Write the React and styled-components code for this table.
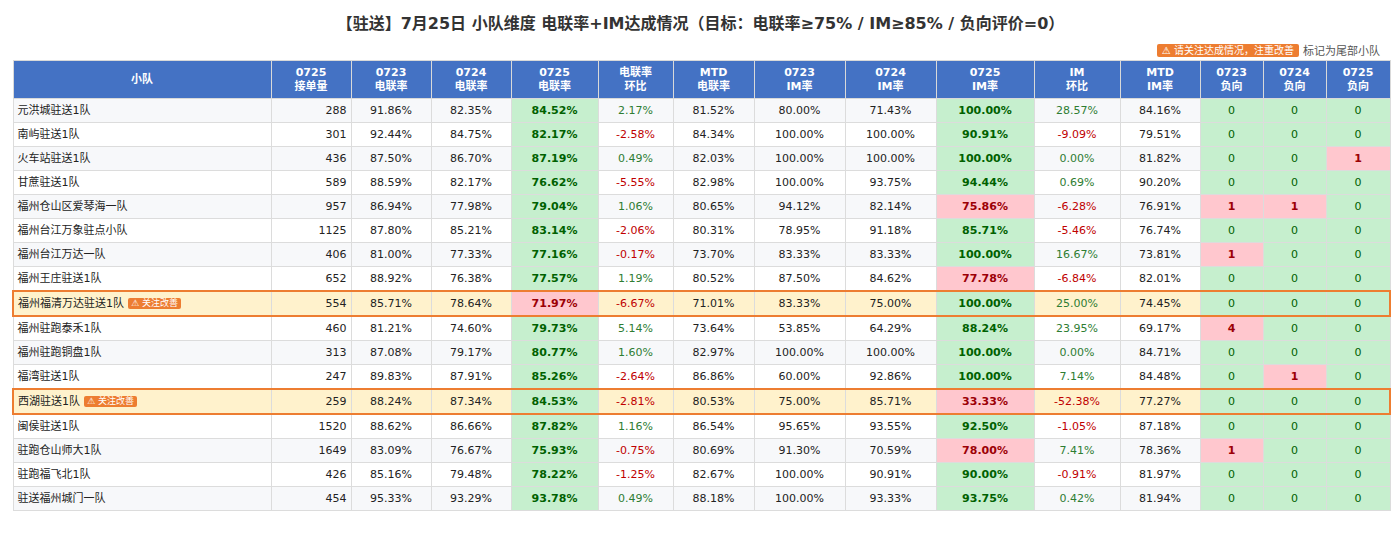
import React from "react";
import styled, { createGlobalStyle, css } from "styled-components";

const GlobalStyle = createGlobalStyle`
  html, body { margin: 0; padding: 0; background: #fff; }
  body { font-family: "DejaVu Sans", "Noto Sans CJK SC", sans-serif; color: #222; }
`;

const Page = styled.div`
  padding: 0 11px 0 12px;
`;

const Title = styled.h1`
  margin: 0;
  padding-top: 12px;
  height: 24px;
  line-height: 24px;
  text-align: center;
  font-size: 16px;
  font-weight: bold;
  color: #333;
`;

const Legend = styled.div`
  display: flex;
  justify-content: flex-end;
  align-items: center;
  gap: 4px;
  height: 16px;
  margin-top: 6px;
  margin-bottom: 2px;
  padding-right: 9px;
  font-size: 11px;
  color: #555;
`;

const Badge = styled.span`
  display: inline-block;
  background: #ed7d31;
  color: #fff;
  border-radius: 2px;
  font-size: ${(p) => (p.$small ? "9px" : "10px")};
  line-height: ${(p) => (p.$small ? "11px" : "13px")};
  padding: 0 ${(p) => (p.$small ? "3px" : "5px")};
  margin-left: ${(p) => (p.$small ? "4px" : "0")};
  white-space: nowrap;
  vertical-align: 1px;
`;

const Table = styled.table`
  width: 1377px;
  table-layout: fixed;
  border-collapse: collapse;
  font-size: 11px;
`;

const Th = styled.th`
  background: #4472c4;
  color: #fff;
  font-weight: bold;
  font-size: 11px;
  line-height: 14px;
  height: 37px;
  padding: 0 2px;
  border: 1px solid #d9d9d9;
  text-align: center;
`;

const tones = {
  good: css`background: #c6efce; color: #006100;`,
  bad: css`background: #ffc7ce; color: #9c0006;`,
};

const Td = styled.td`
  height: 23px;
  padding: 0 4px;
  line-height: 14px;
  border: 1px solid #dcdcdc;
  text-align: ${(p) => p.$align || "center"};
  white-space: nowrap;
  color: #222;
  ${(p) => p.$flag && css`background: #fff2cc; border-top: 2px solid #ed7d31; border-bottom: 2px solid #ed7d31;`}
  ${(p) => p.$first && p.$flag && css`border-left: 2px solid #ed7d31;`}
  ${(p) => p.$last && p.$flag && css`border-right: 2px solid #ed7d31;`}
  ${(p) => p.$tone && tones[p.$tone]}
  ${(p) => p.$strong && css`font-weight: bold;`}
  ${(p) => p.$delta === "up" && css`color: #2e7d32;`}
  ${(p) => p.$delta === "down" && css`color: #c00000;`}
`;

const Tr = styled.tr`
  background: ${(p) => (p.$odd ? "#f7f8fa" : "#fff")};
`;

const widths = [258, 80, 80, 80, 87, 75, 81, 91, 91, 98, 86, 80, 63, 63, 64];
const headers = [
  ["小队"],
  ["0725", "接单量"],
  ["0723", "电联率"],
  ["0724", "电联率"],
  ["0725", "电联率"],
  ["电联率", "环比"],
  ["MTD", "电联率"],
  ["0723", "IM率"],
  ["0724", "IM率"],
  ["0725", "IM率"],
  ["IM", "环比"],
  ["MTD", "IM率"],
  ["0723", "负向"],
  ["0724", "负向"],
  ["0725", "负向"],
];

const raw = [
  ["元洪城驻送1队", 288, "91.86", "82.35", "84.52", "2.17", "81.52", "80.00", "71.43", "100.00", "28.57", "84.16", 0, 0, 0],
  ["南屿驻送1队", 301, "92.44", "84.75", "82.17", "-2.58", "84.34", "100.00", "100.00", "90.91", "-9.09", "79.51", 0, 0, 0],
  ["火车站驻送1队", 436, "87.50", "86.70", "87.19", "0.49", "82.03", "100.00", "100.00", "100.00", "0.00", "81.82", 0, 0, 1],
  ["甘蔗驻送1队", 589, "88.59", "82.17", "76.62", "-5.55", "82.98", "100.00", "93.75", "94.44", "0.69", "90.20", 0, 0, 0],
  ["福州仓山区爱琴海一队", 957, "86.94", "77.98", "79.04", "1.06", "80.65", "94.12", "82.14", "75.86", "-6.28", "76.91", 1, 1, 0],
  ["福州台江万象驻点小队", 1125, "87.80", "85.21", "83.14", "-2.06", "80.31", "78.95", "91.18", "85.71", "-5.46", "76.74", 0, 0, 0],
  ["福州台江万达一队", 406, "81.00", "77.33", "77.16", "-0.17", "73.70", "83.33", "83.33", "100.00", "16.67", "73.81", 1, 0, 0],
  ["福州王庄驻送1队", 652, "88.92", "76.38", "77.57", "1.19", "80.52", "87.50", "84.62", "77.78", "-6.84", "82.01", 0, 0, 0],
  ["福州福清万达驻送1队", 554, "85.71", "78.64", "71.97", "-6.67", "71.01", "83.33", "75.00", "100.00", "25.00", "74.45", 0, 0, 0, true],
  ["福州驻跑泰禾1队", 460, "81.21", "74.60", "79.73", "5.14", "73.64", "53.85", "64.29", "88.24", "23.95", "69.17", 4, 0, 0],
  ["福州驻跑铜盘1队", 313, "87.08", "79.17", "80.77", "1.60", "82.97", "100.00", "100.00", "100.00", "0.00", "84.71", 0, 0, 0],
  ["福湾驻送1队", 247, "89.83", "87.91", "85.26", "-2.64", "86.86", "60.00", "92.86", "100.00", "7.14", "84.48", 0, 1, 0],
  ["西湖驻送1队", 259, "88.24", "87.34", "84.53", "-2.81", "80.53", "75.00", "85.71", "33.33", "-52.38", "77.27", 0, 0, 0, true],
  ["闽侯驻送1队", 1520, "88.62", "86.66", "87.82", "1.16", "86.54", "95.65", "93.55", "92.50", "-1.05", "87.18", 0, 0, 0],
  ["驻跑仓山师大1队", 1649, "83.09", "76.67", "75.93", "-0.75", "80.69", "91.30", "70.59", "78.00", "7.41", "78.36", 1, 0, 0],
  ["驻跑福飞北1队", 426, "85.16", "79.48", "78.22", "-1.25", "82.67", "100.00", "90.91", "90.00", "-0.91", "81.97", 0, 0, 0],
  ["驻送福州城门一队", 454, "95.33", "93.29", "93.78", "0.49", "88.18", "100.00", "93.33", "93.75", "0.42", "81.94", 0, 0, 0],
];

function Row({ r, i }) {
  const [name, orders, r23, r24, r25, rc, rm, i23, i24, i25, ic, im, n23, n24, n25, flag] = r;
  const f = !!flag;
  const delta = (v) => (parseFloat(v) < 0 ? "down" : "up");
  const neg = (n, k) => (
    <Td key={k} $flag={f} $last={k === "n25"} $tone={n > 0 ? "bad" : "good"} $strong={n > 0}>
      {n}
    </Td>
  );
  return (
    <Tr $odd={i % 2 === 0}>
      <Td $align="left" $flag={f} $first>
        {name}
        {f && <Badge $small>⚠ 关注改善</Badge>}
      </Td>
      <Td $align="right" $flag={f}>{orders}</Td>
      <Td $flag={f}>{r23}%</Td>
      <Td $flag={f}>{r24}%</Td>
      <Td $flag={f} $tone={parseFloat(r25) >= 75 ? "good" : "bad"} $strong>{r25}%</Td>
      <Td $flag={f} $delta={delta(rc)}>{rc}%</Td>
      <Td $flag={f}>{rm}%</Td>
      <Td $flag={f}>{i23}%</Td>
      <Td $flag={f}>{i24}%</Td>
      <Td $flag={f} $tone={parseFloat(i25) >= 85 ? "good" : "bad"} $strong>{i25}%</Td>
      <Td $flag={f} $delta={delta(ic)}>{ic}%</Td>
      <Td $flag={f}>{im}%</Td>
      {neg(n23, "n23")}
      {neg(n24, "n24")}
      {neg(n25, "n25")}
    </Tr>
  );
}

export default function App() {
  return (
    <>
      <GlobalStyle />
      <Page>
        <Title>【驻送】7月25日 小队维度 电联率+IM达成情况（目标：电联率≥75% / IM≥85% / 负向评价=0）</Title>
        <Legend>
          <Badge>⚠ 请关注达成情况，注重改善</Badge>
          <span>标记为尾部小队</span>
        </Legend>
        <Table>
          <colgroup>
            {widths.map((w, k) => (
              <col key={k} style={{ width: w }} />
            ))}
          </colgroup>
          <thead>
            <tr>
              {headers.map((h, k) => (
                <Th key={k}>
                  {h.map((line, j) => (
                    <React.Fragment key={j}>
                      {j > 0 && <br />}
                      {line}
                    </React.Fragment>
                  ))}
                </Th>
              ))}
            </tr>
          </thead>
          <tbody>
            {raw.map((r, i) => (
              <Row key={i} r={r} i={i} />
            ))}
          </tbody>
        </Table>
      </Page>
    </>
  );
}
